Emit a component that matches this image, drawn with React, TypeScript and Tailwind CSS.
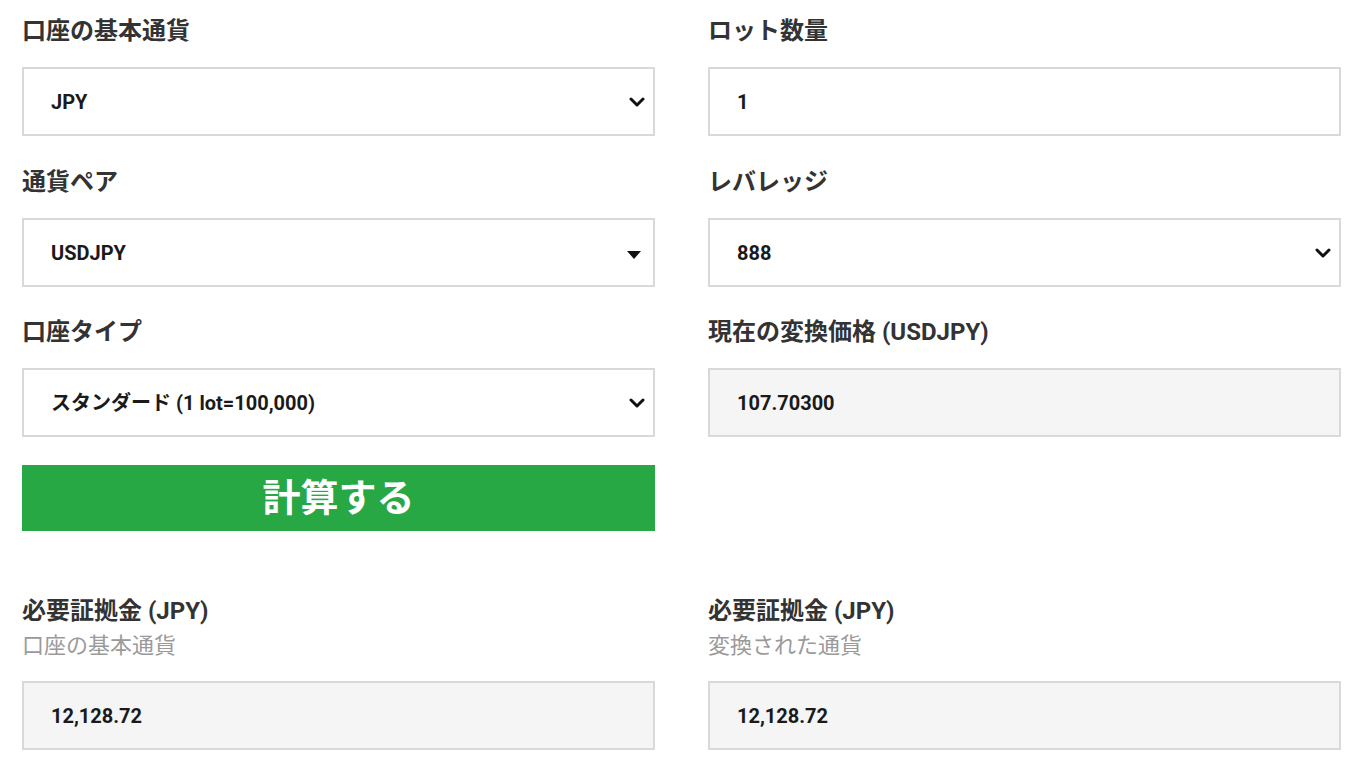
import React from 'react';

const font = { fontFamily: 'Roboto, "Noto Sans CJK JP", sans-serif' };

const Chevron = () => (
    <svg width="16" height="10" viewBox="0 0 16 10" className="pointer-events-none absolute right-[10px] top-1/2 -translate-y-1/2">
        <path d="M2 2l6 6 6-6" fill="none" stroke="#111" strokeWidth="3" strokeLinecap="round" strokeLinejoin="round" />
    </svg>
);

const Caret = () => (
    <svg width="14" height="8" viewBox="0 0 14 8" className="pointer-events-none absolute right-[14px] top-[33px]">
        <path d="M0 0h14L7 8z" fill="#111" />
    </svg>
);

const Label = ({ children }: { children: React.ReactNode }) => (
    <div className="text-[24px] leading-[28px] font-bold text-[#333] mb-[22px]">{children}</div>
);

const Select = ({ value, options, caret }: { value: string; options: string[]; caret?: boolean }) => (
    <div className="relative">
        <select
            defaultValue={value}
            className="w-full h-[69px] appearance-none border-2 border-[#d9d9d9] bg-white pl-[27px] pr-10 text-[20px] font-bold text-[#1a1a1a] outline-none"
            style={font}
        >
            {options.map(o => <option key={o}>{o}</option>)}
        </select>
        {caret ? <Caret /> : <Chevron />}
    </div>
);

const Field = ({ value, readOnly }: { value: string; readOnly?: boolean }) => (
    <input
        defaultValue={value}
        readOnly={readOnly}
        className={`w-full h-[69px] border-2 border-[#d9d9d9] pl-[27px] text-[20px] font-bold text-[#1a1a1a] outline-none ${readOnly ? 'bg-[#f5f5f5]' : 'bg-white'}`}
        style={font}
    />
);

export default function App() {
    return (
        <div className="bg-white w-[1359px] h-[759px] overflow-hidden pl-[22px] pr-[18px] pt-[17px]" style={font}>
            <div className="grid grid-cols-2 gap-x-[53px]">
                <div className="mb-[32px]">
                    <Label>口座の基本通貨</Label>
                    <Select value="JPY" options={['JPY', 'USD', 'EUR']} />
                </div>
                <div className="mb-[32px]">
                    <Label>ロット数量</Label>
                    <Field value="1" />
                </div>
                <div className="mb-[31px]">
                    <Label>通貨ペア</Label>
                    <Select value="USDJPY" options={['USDJPY', 'EURJPY', 'EURUSD']} caret />
                </div>
                <div className="mb-[31px]">
                    <Label>レバレッジ</Label>
                    <Select value="888" options={['888', '500', '100']} />
                </div>
                <div>
                    <Label>口座タイプ</Label>
                    <Select value="スタンダード (1 lot=100,000)" options={['スタンダード (1 lot=100,000)', 'マイクロ (1 lot=1,000)']} />
                </div>
                <div>
                    <Label>現在の変換価格 (USDJPY)</Label>
                    <Field value="107.70300" readOnly />
                </div>
                <div className="mt-[28px]">
                    <button className="w-full h-[66px] bg-[#28a745] text-white text-[38px] font-bold leading-none">計算する</button>
                </div>
                <div />
                <div className="mt-[66px]">
                    <div className="text-[24px] leading-[28px] font-bold text-[#333]">必要証拠金 (JPY)</div>
                    <div className="text-[22px] leading-[26px] text-[#9a9a9a] mt-[8px] mb-[22px]">口座の基本通貨</div>
                    <Field value="12,128.72" readOnly />
                </div>
                <div className="mt-[66px]">
                    <div className="text-[24px] leading-[28px] font-bold text-[#333]">必要証拠金 (JPY)</div>
                    <div className="text-[22px] leading-[26px] text-[#9a9a9a] mt-[8px] mb-[22px]">変換された通貨</div>
                    <Field value="12,128.72" readOnly />
                </div>
            </div>
        </div>
    );
}
